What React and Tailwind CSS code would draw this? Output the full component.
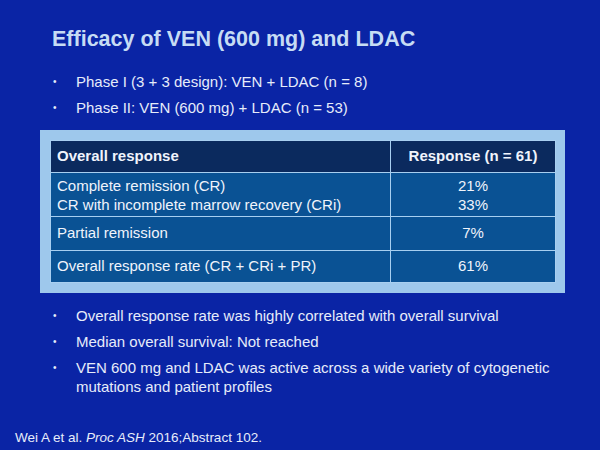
import React from "react";

const topPoints = [
  "Phase I (3 + 3 design): VEN + LDAC (n = 8)",
  "Phase II: VEN (600 mg) + LDAC (n = 53)",
];

const bottomPoints = [
  "Overall response rate was highly correlated with overall survival",
  "Median overall survival: Not reached",
  "VEN 600 mg and LDAC was active across a wide variety of cytogenetic mutations and patient profiles",
];

const Bullet = ({ children }) => (
  <li className="flex items-start">
    <span className="w-[23px] shrink-0 text-[10px] leading-[19px]">•</span>
    <span className="leading-[19px]">{children}</span>
  </li>
);

export default function App() {
  return (
    <div
      className="w-[600px] h-[450px] bg-[#0a24a5] text-[#e6ecfa] flex flex-col overflow-hidden"
      style={{ fontFamily: "'Liberation Sans', Arial, sans-serif" }}
    >
      <h1 className="pl-[52px] pt-[26px] text-[21.5px] leading-[26px] font-bold text-[#c6dcf4]">
        Efficacy of VEN (600 mg) and LDAC
      </h1>

      <ul className="pl-[53px] mt-[20px] flex flex-col gap-[7px] text-[15px]">
        {topPoints.map((p, i) => (
          <Bullet key={i}>{p}</Bullet>
        ))}
      </ul>

      <div className="ml-[40px] mt-[13px] w-[525px] bg-[#9ec8ec] p-[10px] pr-[9px]">
        <div className="border border-[#a8cff0] text-[15px] text-[#f0f4fc]">
          <div className="flex bg-[#0b2a5e] h-[31px] font-bold">
            <div className="w-[340px] flex items-center px-[6px] border-r border-[#a8cff0]">
              Overall response
            </div>
            <div className="flex-1 flex items-center justify-center">Response (n = 61)</div>
          </div>
          <div className="flex bg-[#0a5294] h-[44px] border-t border-[#a8cff0] leading-[19px]">
            <div className="w-[340px] flex flex-col justify-center px-[6px] border-r border-[#a8cff0]">
              <span>Complete remission (CR)</span>
              <span>CR with incomplete marrow recovery (CRi)</span>
            </div>
            <div className="flex-1 flex flex-col items-center justify-center">
              <span>21%</span>
              <span>33%</span>
            </div>
          </div>
          <div className="flex bg-[#0a5294] h-[34px] border-t border-[#a8cff0]">
            <div className="w-[340px] flex items-center px-[6px] border-r border-[#a8cff0]">
              Partial remission
            </div>
            <div className="flex-1 flex items-center justify-center">7%</div>
          </div>
          <div className="flex bg-[#0a5294] h-[32px] border-t border-[#a8cff0]">
            <div className="w-[340px] flex items-center px-[6px] border-r border-[#a8cff0]">
              Overall response rate (CR + CRi + PR)
            </div>
            <div className="flex-1 flex items-center justify-center">61%</div>
          </div>
        </div>
      </div>

      <ul className="pl-[53px] pr-[40px] mt-[13px] flex flex-col gap-[7px] text-[15px]">
        {bottomPoints.map((p, i) => (
          <Bullet key={i}>{p}</Bullet>
        ))}
      </ul>

      <p className="mt-auto mb-[3px] pl-[15px] text-[13.5px] leading-[18px]">
        Wei A et al. <i>Proc ASH</i> 2016;Abstract 102.
      </p>
    </div>
  );
}
